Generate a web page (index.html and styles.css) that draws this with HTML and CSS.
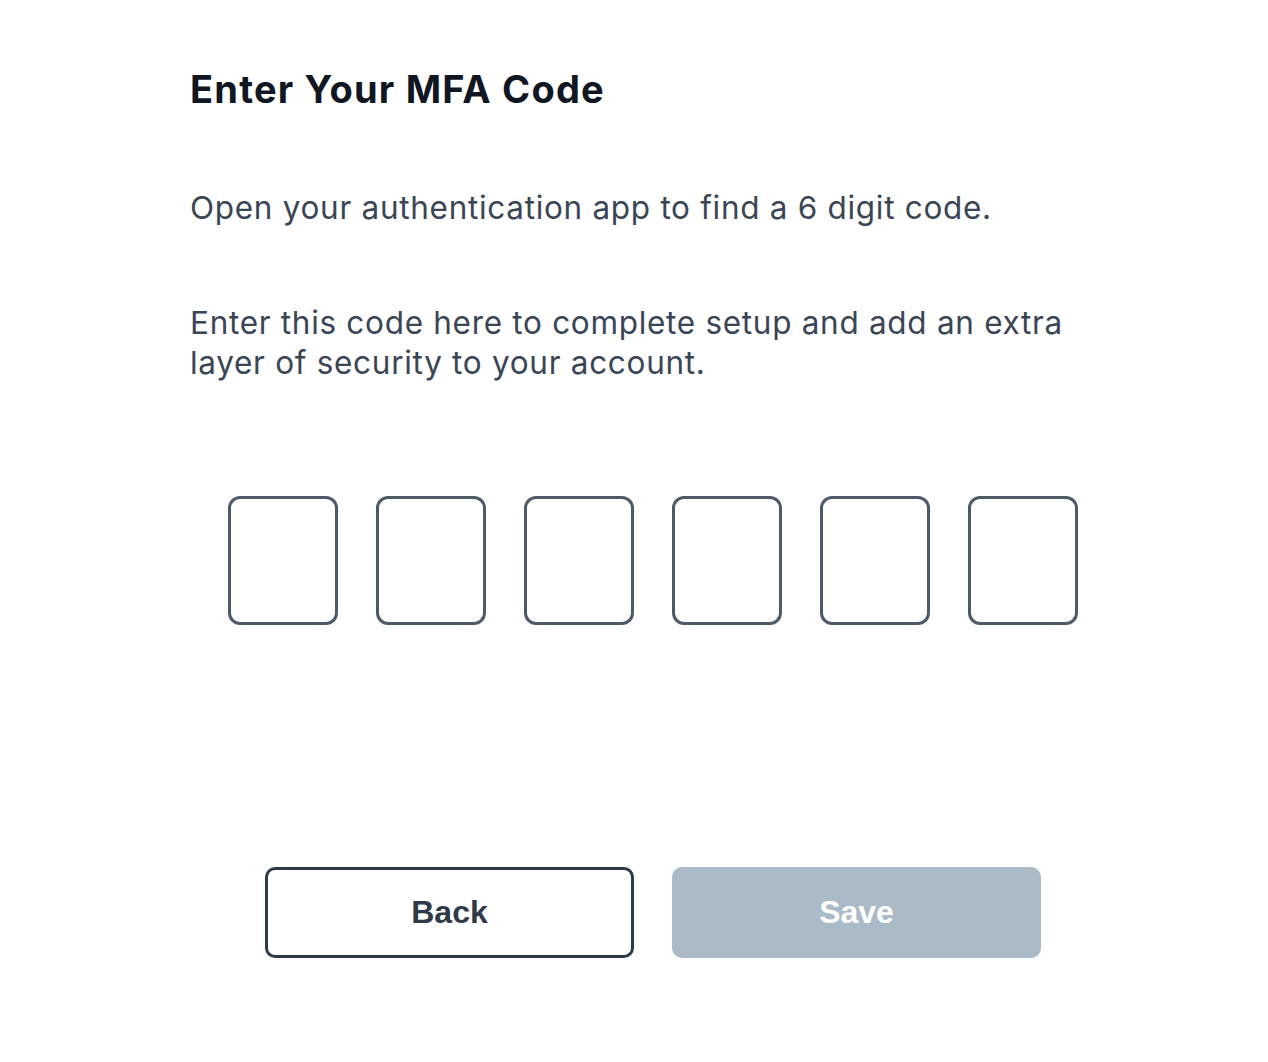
FILE: index.html
```html
<!DOCTYPE html>
<html>
<head>
<meta charset="utf-8">
<link rel="stylesheet" href="styles.css">
</head>
<body>
<main class="panel">
  <h1 class="title">Enter Your MFA Code</h1>
  <p class="text first">Open your authentication app to find a 6 digit code.</p>
  <p class="text second">Enter this code here to complete setup and add an extra layer of security to your account.</p>
  <div class="code-row">
    <input class="digit" type="text" maxlength="1">
    <input class="digit" type="text" maxlength="1">
    <input class="digit" type="text" maxlength="1">
    <input class="digit" type="text" maxlength="1">
    <input class="digit" type="text" maxlength="1">
    <input class="digit" type="text" maxlength="1">
  </div>
  <div class="actions">
    <button class="btn back">Back</button>
    <button class="btn save">Save</button>
  </div>
</main>
</body>
</html>
```
FILE: styles.css
```css
html, body {
  margin: 0;
  padding: 0;
  background: #ffffff;
}
body {
  font-family: Inter, "Noto Sans", sans-serif;
}
.panel {
  width: 926px;
  margin-left: 190px;
  padding-top: 69px;
}
.title {
  margin: 0;
  font-size: 38px;
  line-height: 40px;
  font-weight: 700;
  color: #111722;
  letter-spacing: 1.2px;
}
.text {
  margin: 0;
  font-size: 31.5px;
  line-height: 40px;
  color: #3a4655;
  letter-spacing: 0.7px;
}
.first {
  margin-top: 79px;
}
.second {
  margin-top: 75px;
}
.code-row {
  display: flex;
  justify-content: center;
  gap: 38px;
  margin-top: 113px;
}
.digit {
  box-sizing: border-box;
  width: 110px;
  height: 129px;
  border: 3px solid #4f5a68;
  border-radius: 12px;
  background: #fff;
  margin: 0;
  padding: 0;
}
.actions {
  display: flex;
  justify-content: center;
  gap: 38px;
  margin-top: 242px;
}
.btn {
  box-sizing: border-box;
  width: 369px;
  height: 91px;
  border-radius: 10px;
  font-family: "Liberation Sans", Arial, sans-serif;
  font-weight: 700;
  font-size: 32px;
  padding: 0;
  margin: 0;
}
.back {
  background: #fff;
  border: 3px solid #2f3a48;
  color: #2f3a48;
}
.save {
  background: #abbac7;
  border: none;
  color: #ffffff;
}
```
